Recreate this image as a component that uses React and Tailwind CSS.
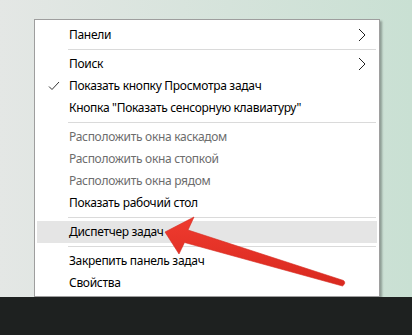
import React from 'react';

const Chevron = () => (
  <svg width="8" height="14" viewBox="0 0 8 14" className="absolute right-[11px] top-[4px]">
    <path d="M1 1 L7 7 L1 13" fill="none" stroke="#222" strokeWidth="1" />
  </svg>
);

const Check = () => (
  <svg width="12" height="10" viewBox="0 0 12 10" className="absolute left-[11px] top-[6px]">
    <path d="M1 5.5 L4 8.5 L11 1" fill="none" stroke="#333" strokeWidth="1" />
  </svg>
);

const Item = ({ label, disabled, checked, sub, active }) => (
  <div
    className={`relative mx-[2px] h-[22px] flex items-center pl-[32px] text-[12px] tracking-[-0.3px] ${
      disabled ? 'text-[#6d6d6d]' : 'text-black'
    } ${active ? 'bg-[#e5e5e5]' : ''}`}
  >
    {checked && <Check />}
    <span className="leading-none">{label}</span>
    {sub && <Chevron />}
  </div>
);

const Sep = () => (
  <div className="h-[7px] flex items-center pl-[33px] pr-[3px]">
    <div className="h-px w-full bg-[#dadada]" />
  </div>
);

export default function App() {
  return (
    <div
      className="relative w-[412px] h-[335px] overflow-hidden flex flex-col"
      style={{ fontFamily: '"Noto Sans", "Open Sans", sans-serif' }}
    >
      <div className="h-[297px] bg-gradient-to-r from-[#e4e7e5] to-[#c9e0d3] pl-[34px] pt-[19px]">
        <div className="w-[346px] h-[278px] bg-white border border-[#9e9e9e] shadow-[2px_2px_2px_rgba(0,0,0,0.3)] pt-[4px]">
          <Item label="Панели" sub />
          <Sep />
          <Item label="Поиск" sub />
          <Item label="Показать кнопку Просмотра задач" checked />
          <Item label='Кнопка "Показать сенсорную клавиатуру"' />
          <Sep />
          <Item label="Расположить окна каскадом" disabled />
          <Item label="Расположить окна стопкой" disabled />
          <Item label="Расположить окна рядом" disabled />
          <Item label="Показать рабочий стол" />
          <Sep />
          <Item label="Диспетчер задач" active />
          <Sep />
          <Item label="Закрепить панель задач" />
          <Item label="Свойства" />
        </div>
      </div>
      <div className="flex-1 bg-[#1e2120]" />

      <svg className="absolute left-0 top-0 pointer-events-none" width="412" height="335" viewBox="0 0 412 335">
        <defs>
          <linearGradient id="arr" x1="0" y1="0" x2="0" y2="1">
            <stop offset="0" stopColor="#ef3b2f" />
            <stop offset="1" stopColor="#d9291f" />
          </linearGradient>
        </defs>
        <path
          d="M165 232 L194 217 L188 230 L343.5 280.5 Q346.5 283 342.5 286 L184.5 242.5 L179 254 Z"
          fill="url(#arr)"
          stroke="#d52a20"
          strokeWidth="0.6"
          strokeLinejoin="round"
        />
      </svg>
    </div>
  );
}
